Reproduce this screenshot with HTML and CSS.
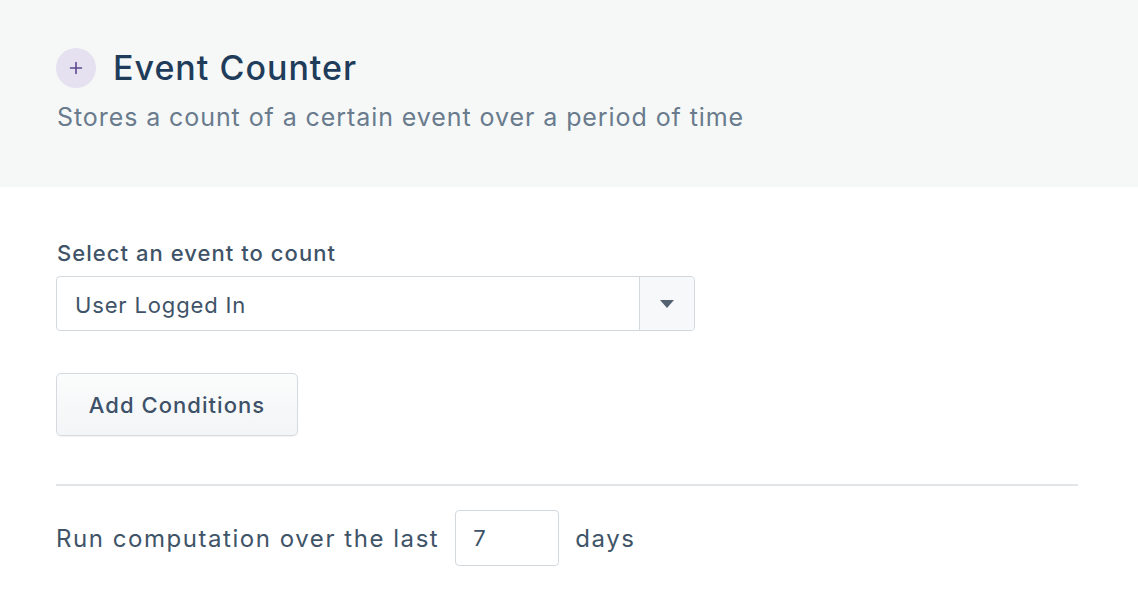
FILE: index.html
```html
<!DOCTYPE html>
<html>
<head>
<meta charset="utf-8">
<link rel="stylesheet" href="styles.css">
</head>
<body>
<header class="head">
  <div class="title-row">
    <span class="badge">
      <svg width="14" height="14" viewBox="0 0 14 14"><path d="M7 1.5v11M1.5 7h11" stroke="#5b4890" stroke-width="1.6" stroke-linecap="round"/></svg>
    </span>
    <h1 class="title">Event Counter</h1>
  </div>
  <p class="subtitle">Stores a count of a certain event over a period of time</p>
</header>
<main class="body">
  <label class="label">Select an event to count</label>
  <div class="select">
    <span class="select-value">User Logged In</span>
    <span class="select-arrow">
      <svg width="14" height="8" viewBox="0 0 14 8"><path d="M0 0h14L7 8z" fill="#536171"/></svg>
    </span>
  </div>
  <button class="btn">Add Conditions</button>
  <hr class="rule">
  <div class="range">
    <span>Run computation over the last</span>
    <span class="num">7</span>
    <span>days</span>
  </div>
</main>
</body>
</html>
```
FILE: styles.css
```css
* { box-sizing: border-box; }
html, body { margin: 0; padding: 0; background: #fff; }
body { font-family: Inter, "Noto Sans", sans-serif; color: #3d5166; }
.head { background: #f6f8f8; height: 187px; padding: 48px 56px 0; }
.title-row { display: flex; align-items: center; gap: 17px; }
.badge { width: 40px; height: 40px; border-radius: 50%; background: #e5e1f0; display: flex; align-items: center; justify-content: center; }
.title { margin: 0; font-size: 34px; font-weight: 500; color: #1f3c5a; line-height: 40px; letter-spacing: 1px; }
.subtitle { margin: 12px 0 0 1px; font-size: 25px; color: #697b8c; line-height: 34px; font-weight: 400; letter-spacing: 0.92px; }
.body { padding: 52px 60px 0 56px; }
.label { display: block; font-size: 22px; font-weight: 500; color: #3f5368; margin-left: 1px; line-height: 28px; letter-spacing: 1.05px; }
.select { margin-top: 9px; width: 639px; height: 55px; border: 1px solid #d3d8dd; border-radius: 4px; display: flex; }
.select-value { flex: 1; display: flex; align-items: center; padding: 3px 0 0 18px; font-size: 22px; color: #3f5368; letter-spacing: 0.85px; }
.select-arrow { width: 55px; border-left: 1px solid #d3d8dd; background: #f7f8f9; display: flex; align-items: center; justify-content: center; border-radius: 0 4px 4px 0; }
.btn { display: block; margin-top: 42px; width: 242px; height: 63px; border: 1px solid #d5dadf; border-radius: 5px; background: linear-gradient(#fbfcfc, #f3f5f6); box-shadow: 0 1px 1px rgba(0,0,0,0.05); font-family: inherit; font-size: 22px; font-weight: 500; color: #3d5168; padding: 0; letter-spacing: 1.05px; }
.rule { margin: 48px 0 0; border: 0; border-top: 2px solid #e1e5e8; width: 1022px; }
.range { margin-top: 24px; display: flex; align-items: center; gap: 16px; font-size: 24px; color: #405468; letter-spacing: 1.55px; }
.num { width: 104px; height: 56px; border: 1px solid #d3d8dd; border-radius: 4px; display: flex; align-items: center; padding-left: 17px; font-size: 22px; color: #3f5368; letter-spacing: 0; }
```
